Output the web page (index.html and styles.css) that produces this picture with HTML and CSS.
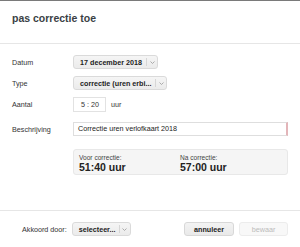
FILE: index.html
```html
<!DOCTYPE html>
<html lang="nl">
<head>
  <meta charset="UTF-8" />
  <meta name="viewport" content="width=device-width, initial-scale=1.0" />
  <title>pas correctie toe</title>
  <link rel="stylesheet" href="styles.css">
</head>
<body>
  <div class="modal">
    <div class="modal-header">
      <h1>pas correctie toe</h1>
    </div>

    <div class="modal-body">
      <div class="row">
        <label>Datum</label>
        <div class="select select-datum">
          <span class="value">17 december 2018</span>
          <span class="caret"><svg width="5" height="3" viewBox="0 0 5 3"><path d="M0.5 0.5 L2.5 2.5 L4.5 0.5" fill="none" stroke="#999" stroke-width="0.8"/></svg></span>
        </div>
      </div>

      <div class="row">
        <label>Type</label>
        <div class="select select-type">
          <span class="value">correctie (uren erbi...</span>
          <span class="caret"><svg width="5" height="3" viewBox="0 0 5 3"><path d="M0.5 0.5 L2.5 2.5 L4.5 0.5" fill="none" stroke="#999" stroke-width="0.8"/></svg></span>
        </div>
      </div>

      <div class="row">
        <label>Aantal</label>
        <div class="time-input">5 : 20</div>
        <span class="unit">uur</span>
      </div>

      <div class="row">
        <label>Beschrijving</label>
        <div class="text-input">Correctie uren verlofkaart 2018</div>
      </div>

      <div class="row">
        <label></label>
        <div class="summary">
          <div class="summary-col">
            <div class="summary-label">Voor correctie:</div>
            <div class="summary-value">51:40 uur</div>
          </div>
          <div class="summary-col">
            <div class="summary-label">Na correctie:</div>
            <div class="summary-value">57:00 uur</div>
          </div>
        </div>
      </div>
    </div>

    <div class="modal-footer">
      <span class="footer-label">Akkoord door:</span>
      <div class="select select-approve">
        <span class="value">selecteer...</span>
        <span class="caret"><svg width="5" height="3" viewBox="0 0 5 3"><path d="M0.5 0.5 L2.5 2.5 L4.5 0.5" fill="none" stroke="#999" stroke-width="0.8"/></svg></span>
      </div>
      <div class="buttons">
        <button class="btn">annuleer</button>
        <button class="btn btn-disabled">bewaar</button>
      </div>
    </div>
  </div>
</body>
</html>
```

FILE: styles.css
```css
* {
  margin: 0;
  padding: 0;
  box-sizing: border-box;
  font-family: 'Liberation Sans', Arial, Helvetica, sans-serif;
}

body {
  width: 300px;
  height: 247px;
  background: white;
  color: #333;
  overflow: hidden;
}

.modal {
  width: 300px;
  height: 247px;
  border-top: 1px solid #7a7a7a;
  display: flex;
  flex-direction: column;
}

.modal-header {
  height: 43px;
  padding: 10px 12px 0;
  border-bottom: 1px solid #e6e6e6;
}

.modal-header h1 {
  font-size: 10.5px;
  font-weight: bold;
  color: #3a3f45;
  line-height: 14px;
}

.modal-body {
  height: 166px;
  padding: 11px 12px 0;
  display: flex;
  flex-direction: column;
  gap: 7px;
}

.row {
  display: flex;
  align-items: center;
  min-height: 14px;
}

.row label {
  width: 61px;
  flex-shrink: 0;
  font-size: 7.2px;
  color: #333;
}

.select {
  height: 14px;
  display: flex;
  align-items: center;
  background: linear-gradient(to bottom, #f5f5f5, #ebebeb);
  border: 1px solid #dadada;
  border-radius: 3px;
  font-size: 7.2px;
  font-weight: bold;
  color: #222;
}

.select .value {
  flex: 1;
  padding: 0 6px;
  white-space: nowrap;
  overflow: hidden;
}

.select .caret {
  width: 11px;
  height: 8px;
  border-left: 1px solid #d6d6d6;
  display: flex;
  align-items: center;
  justify-content: center;
}

.select-datum {
  width: 85px;
}

.select-type {
  width: 94px;
}

.select-approve {
  width: 59px;
}

.time-input {
  width: 33px;
  height: 15px;
  border: 1px solid #e2e2e2;
  font-size: 7.2px;
  line-height: 13px;
  text-align: right;
  padding-right: 6px;
  color: #333;
}

.unit {
  margin-left: 5px;
  font-size: 7.2px;
}

.row:nth-child(4) {
  margin-top: 3px;
}

.text-input {
  width: 215px;
  height: 14px;
  border: 1px solid #dedede;
  border-right: 2px solid #e3b5b9;
  font-size: 7.2px;
  line-height: 12px;
  padding-left: 4px;
  color: #222;
}

.summary {
  width: 215px;
  height: 26px;
  margin-top: 6px;
  background: #f5f5f5;
  border: 1px solid #e8e8e8;
  border-radius: 3px;
  display: flex;
  padding: 3px 5px 0;
}

.summary-col {
  width: 101px;
}

.summary-label {
  font-size: 6.6px;
  color: #444;
  line-height: 9px;
}

.summary-value {
  font-size: 10.5px;
  font-weight: bold;
  color: #222;
  line-height: 11px;
}

.modal-footer {
  flex: 1;
  border-top: 1px solid #e6e6e6;
  display: flex;
  align-items: center;
  padding: 0 12px 0 22px;
}

.footer-label {
  font-size: 7.2px;
  margin-right: 5px;
  color: #333;
}

.buttons {
  margin-left: auto;
  display: flex;
  gap: 5px;
}

.btn {
  width: 50px;
  height: 14px;
  background: linear-gradient(to bottom, #f3f3f3, #e9e9e9);
  border: 1px solid #d8d8d8;
  border-radius: 3px;
  font-size: 7.2px;
  font-weight: bold;
  color: #222;
}

.btn-disabled {
  width: 49px;
  background: #f8f8f8;
  border-color: #ececec;
  color: #bbb;
  font-weight: normal;
}
```
